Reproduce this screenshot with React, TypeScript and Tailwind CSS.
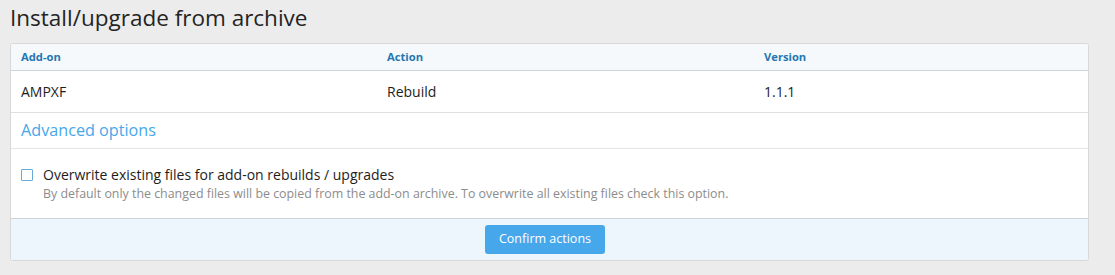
import React from "react";

export default function App() {
  const font = { fontFamily: '"Segoe UI", "Open Sans", "Noto Sans", sans-serif' };
  return (
    <div className="w-[1115px] h-[275px] bg-[#ececec] px-[10px] pt-[3px] text-[#141414]" style={font}>
      <h1 className="text-[22.5px] leading-[29px] font-normal text-[#242424] mb-[11px]">Install/upgrade from archive</h1>
      <div className="w-[1079px] border border-[#d8d8d8] rounded-[3px] bg-white overflow-hidden">
        <div className="grid grid-cols-[366px_377px_1fr] h-[27px] items-center bg-[#f5f9fc] border-b border-[#d0d5da] text-[11.2px] font-bold text-[#2577b1]">
          <div className="pl-[10px]">Add-on</div>
          <div className="pl-[10px]">Action</div>
          <div className="pl-[10px]">Version</div>
        </div>
        <div className="grid grid-cols-[366px_377px_1fr] h-[42px] items-center border-b border-[#e0e0e0] text-[14px] text-[#1d1d1d]">
          <div className="pl-[10px]">AMPXF</div>
          <div className="pl-[10px]">Rebuild</div>
          <div className="pl-[10px]">1.1.1</div>
        </div>
        <div className="h-[36px] flex items-center pl-[10px] border-b border-[#e5e5e5] text-[16.2px] text-[#47a7eb]">Advanced options</div>
        <div className="h-[70px] pl-[10px] pt-[16px] border-b border-[#d0d5da]">
          <div className="flex items-center gap-[10px] h-[20px]">
            <span className="w-[12px] h-[12px] border-[1.5px] border-[#6aa9d6] rounded-[1px] bg-white" />
            <span className="text-[14px] leading-[20px] text-[#1d1d1d]">Overwrite existing files for add-on rebuilds / upgrades</span>
          </div>
          <div className="pl-[22px] text-[12.4px] leading-[18px] text-[#8c8c8c]">By default only the changed files will be copied from the add-on archive. To overwrite all existing files check this option.</div>
        </div>
        <div className="h-[41px] bg-[#edf5fd] flex items-center pl-[474px]">
          <button className="w-[120px] h-[29px] rounded-[3px] bg-[#47a7eb] text-white text-[12.5px]">Confirm actions</button>
        </div>
      </div>
    </div>
  );
}
